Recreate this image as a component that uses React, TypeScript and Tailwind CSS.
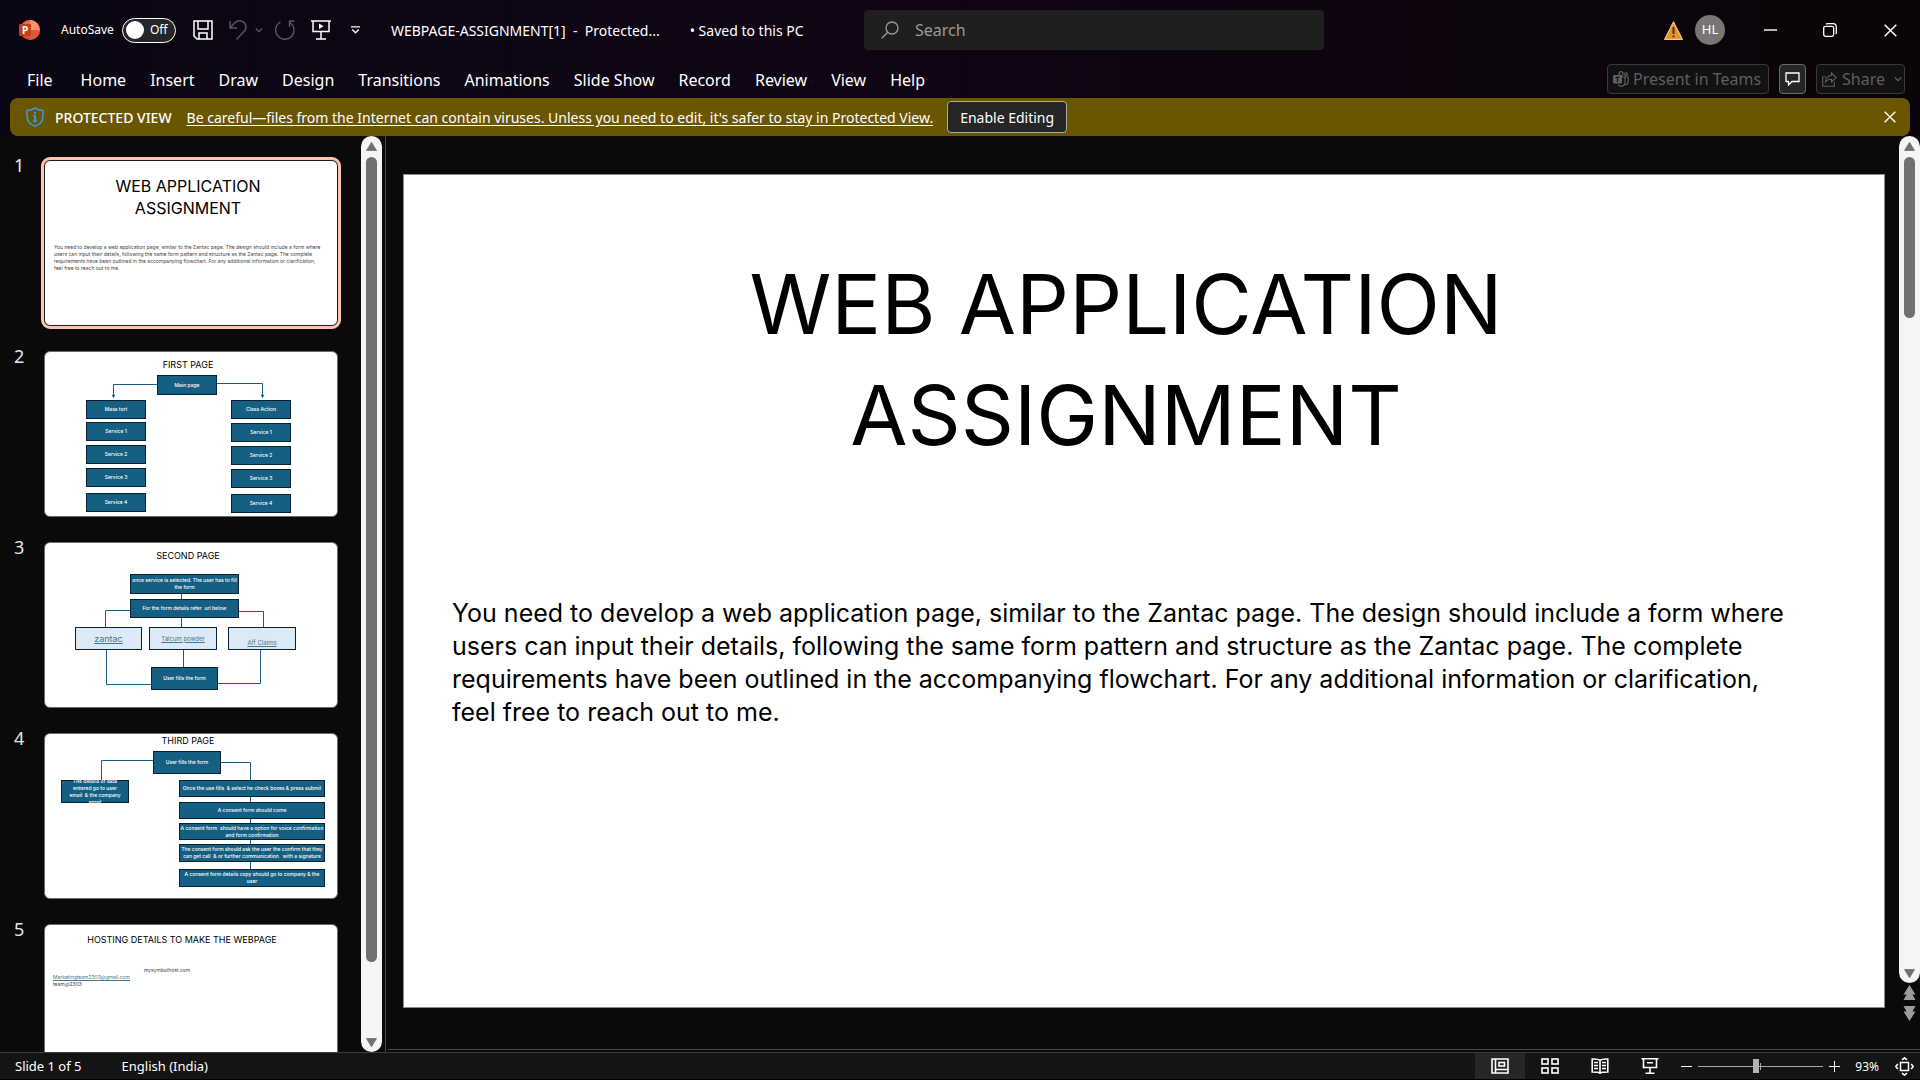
import type { ReactNode } from "react";

const stroke = { fill: "none", stroke: "currentColor" } as const;

function PowerPointLogo() {
  return (
    <svg width="21" height="20" viewBox="0 0 21 20" aria-label="PowerPoint">
      <circle cx="11" cy="10" r="10" fill="#d35230" />
      <path d="M11 0a10 10 0 0 1 10 10H11z" fill="#ff8f6b" />
      <path d="M11 10h10a10 10 0 0 1-10 10z" fill="#e0583a" />
      <path d="M11 0a10 10 0 0 0-10 10h10z" fill="#ed6c47" />
      <rect x="0" y="4" width="12" height="12" rx="1" fill="#c43e1c" />
      <text x="3" y="13.500" fontSize="10" fontWeight="700" fill="#fff" fontFamily="Noto Sans, sans-serif">P</text>
    </svg>
  );
}

function SaveIcon() {
  return (
    <svg width="20" height="20" viewBox="0 0 20 20" {...stroke} strokeWidth="1.500">
      <path d="M1 1h18v18H4l-3-3z" />
      <path d="M5 1v8h10V1M6 19v-6h8v6" />
    </svg>
  );
}

function UndoIcon() {
  return (
    <svg width="18" height="20" viewBox="0 0 18 20" {...stroke} strokeWidth="1.400">
      <path d="M1 1v7h7M1.500 7.500l4-4.500C9 0 13 0 15.500 3c2.300 3 1.800 6-.5 8.500L7.500 19.500" />
    </svg>
  );
}

function RedoIcon() {
  return (
    <svg width="21" height="20" viewBox="0 0 21 20" {...stroke} strokeWidth="1.400">
      <path d="M14 1h5.500M14.500 1v6M5.500 2a9.200 9.200 0 1 0 9.500.5" />
    </svg>
  );
}

function PresentIcon() {
  return (
    <svg width="20" height="20" viewBox="0 0 20 20" {...stroke} strokeWidth="1.500">
      <path d="M0 1h20M2 1v10.500h16V1M10 11.500V19M5 19h10" />
      <path d="M8 3.500v5.500l4.500-2.750z" fill="currentColor" stroke="none" />
    </svg>
  );
}

function Chevron({ size = 8 }: { size?: number }) {
  return (
    <svg width={size} height={size} viewBox="0 0 8 8" {...stroke} strokeWidth="1.300">
      <path d="M.8 2.500 4 5.700l3.200-3.200" />
    </svg>
  );
}

function CustomizeIcon() {
  return (
    <svg width="9" height="8" viewBox="0 0 9 8" {...stroke} strokeWidth="1.300">
      <path d="M0 .8h9M1.200 3.500l3.300 3.300 3.300-3.300" />
    </svg>
  );
}

function CloseIcon({ size }: { size: number }) {
  return (
    <svg width={size} height={size} viewBox="0 0 13 13" {...stroke} strokeWidth="1.500">
      <path d="m.7.7 11.600 11.600M12.300.7.700 12.300" />
    </svg>
  );
}

function ShieldIcon() {
  return (
    <svg width="18" height="20" viewBox="0 0 18 20" fill="none" stroke="#3a96d8" strokeWidth="1.600">
      <path d="M9 1C6.500 2.800 4 3.500 1 3.500V9c0 5 3 8.500 8 10.200C14 17.500 17 14 17 9V3.500C14 3.500 11.500 2.800 9 1z" />
      <path d="M9 5v2.200M7.300 9H9M9 8.500V14M7 14.300h4" strokeWidth="2" />
    </svg>
  );
}

function WarningIcon() {
  return (
    <svg width="19" height="19" viewBox="0 0 19 19" aria-label="Warning">
      <path d="M9.500 1 18.300 18.300H.7z" fill="#e8912d" stroke="#f4c77b" strokeWidth="1.200" strokeLinejoin="round" />
      <path d="M9.500 6v7M9.500 14.500v2" stroke="#4a3a22" strokeWidth="2" />
    </svg>
  );
}

function TeamsIcon() {
  return (
    <svg width="16" height="16" viewBox="0 0 16 16" {...stroke} strokeWidth="1.200">
      <circle cx="8" cy="2.700" r="2" />
      <circle cx="13" cy="3.200" r="1.400" />
      <path d="M9 6h3v5.500a3.800 3.800 0 0 1-7 2M12 6h3.200v5a2.600 2.600 0 0 1-3 2.500" />
      <rect x="0" y="4" width="9" height="8.500" rx="1" fill="currentColor" stroke="none" />
      <path d="M2.500 6.300h4M4.500 6.300V11" stroke="#121212" />
    </svg>
  );
}

function CommentIcon() {
  return (
    <svg width="15" height="14" viewBox="0 0 15 14" {...stroke} strokeWidth="1.300">
      <path d="M1 1h13v8.500H7L3.500 13V9.500H1z" />
    </svg>
  );
}

function ShareIcon() {
  return (
    <svg width="15" height="15" viewBox="0 0 15 15" {...stroke} strokeWidth="1.100">
      <path d="M4 5H.7v9.300h11.600V10" />
      <path d="M9.500 1v2.500C6 3.700 4 6 3.500 10c1.500-2 3.500-2.700 6-2.700V10l4.700-4.500z" />
    </svg>
  );
}

const tabs = ["File", "Home", "Insert", "Draw", "Design", "Transitions", "Animations", "Slide Show", "Record", "Review", "View", "Help"];

function TitleBar() {
  return (
    <div className="grid h-[60px] grid-cols-[864fr_460fr_596fr] items-center">
      <div className="flex min-w-0 items-center whitespace-nowrap pl-[19px] text-[14px]">
        <PowerPointLogo />
        <label htmlFor="autosave" className="ml-[21px] text-[12px]">AutoSave</label>
        <button id="autosave" role="switch" aria-checked="false" className="ml-2 flex h-[25px] w-[54px] items-center gap-[6px] rounded-full border border-white bg-[#262626] pl-[3px] text-[12px]">
          <span className="size-[18px] rounded-full bg-white" />
          Off
        </button>
        <button aria-label="Save" className="ml-[17px]"><SaveIcon /></button>
        <button aria-label="Undo" className="ml-4 flex items-center gap-2 text-[#5a5860]"><UndoIcon /><Chevron /></button>
        <button aria-label="Redo" className="ml-3 text-[#5a5860]"><RedoIcon /></button>
        <button aria-label="Start from beginning" className="ml-[15px]"><PresentIcon /></button>
        <button aria-label="Customize Quick Access Toolbar" className="ml-5"><CustomizeIcon /></button>
        <h1 className="ml-[31px] whitespace-pre">WEBPAGE-ASSIGNMENT[1]  -  Protected...</h1>
        <button className="ml-[30px]">• Saved to this PC</button>
      </div>
      <label className="flex h-10 items-center gap-4 rounded bg-[#1f1f1f] pl-[17px] text-[#9a9a9a]">
        <svg width="18" height="18" viewBox="0 0 18 18" {...stroke} strokeWidth="1.300">
          <circle cx="11" cy="7" r="6" />
          <path d="M6.800 11.200.7 17.300" />
        </svg>
        <input type="search" aria-label="Search" placeholder="Search" className="min-w-0 flex-1 bg-transparent text-[16px] outline-none placeholder:text-[#9a9a9a]" />
      </label>
      <div className="flex items-center justify-end pr-[23px]">
        <WarningIcon />
        <button className="ml-3 size-[30px] rounded-full bg-[#7a7474] text-[13px]">HL</button>
        <button aria-label="Minimize" className="ml-[39px]">
          <svg width="13" height="13" viewBox="0 0 13 13" {...stroke} strokeWidth="1.400"><path d="M0 6h13" /></svg>
        </button>
        <button aria-label="Restore" className="ml-[46px]">
          <svg width="14" height="14" viewBox="0 0 14 14" {...stroke} strokeWidth="1.300">
            <rect x=".7" y="3.300" width="10" height="10" rx="1.800" />
            <path d="M3 1.200C3.500.8 4 .7 4.500.7H10a3.300 3.300 0 0 1 3.300 3.300v5.500c0 .5-.1 1-.5 1.500" />
          </svg>
        </button>
        <button aria-label="Close" className="ml-[47px]"><CloseIcon size={13} /></button>
      </div>
    </div>
  );
}

function TabRow() {
  return (
    <div className="flex h-[38px] items-center justify-between whitespace-nowrap pl-[27px] pr-[15px] text-[16px]">
      <nav className="flex gap-6 pt-[2px]">
        {tabs.map((tab) => (
          <button key={tab} className="first:mr-1">{tab}</button>
        ))}
      </nav>
      <div className="flex h-[30px] gap-[10px] text-[#5f5f5f]">
        <button className="flex w-[162px] items-center gap-1 rounded border border-[#3a3a3a] bg-[#121212] pl-[5px]"><TeamsIcon />Present in Teams</button>
        <button aria-label="Comments" className="flex w-[27px] items-center justify-center rounded border border-[#6b6b6b] bg-[#262626] text-white"><CommentIcon /></button>
        <button className="flex w-[89px] items-center gap-[5px] rounded border border-[#3a3a3a] bg-[#121212] pl-[5px]"><ShareIcon />Share<span className="ml-1"><Chevron size={8} /></span></button>
      </div>
    </div>
  );
}

function ProtectedViewBar() {
  return (
    <div role="alert" className="mx-[10px] flex h-[38px] items-center whitespace-nowrap rounded-lg bg-[#6b5600] pl-4 pr-[14px] text-[14px]">
      <ShieldIcon />
      <strong className="ml-[11px] font-medium">PROTECTED VIEW</strong>
      <a href="#protected-view" className="ml-[15px] underline underline-offset-2">Be careful—files from the Internet can contain viruses. Unless you need to edit, it's safer to stay in Protected View.</a>
      <button className="ml-[14px] h-8 w-[120px] rounded border border-[#a8a8a8] bg-[#262626]">Enable Editing</button>
      <button aria-label="Close message" className="ml-auto"><CloseIcon size={12} /></button>
    </div>
  );
}

function Triangle({ down = false }: { down?: boolean }) {
  return (
    <svg width="11" height="9" viewBox="0 0 11 9" fill="#707070">
      <path d={down ? "M.5.500h10L5.500 8.700z" : "M.5 8.500h10L5.500.3z"} stroke="#707070" strokeLinejoin="round" strokeWidth=".8" />
    </svg>
  );
}

function Scrollbar({ thumb, rest }: { thumb: number; rest: number }) {
  return (
    <div className="flex min-h-0 w-[21px] flex-1 flex-col items-center rounded-full bg-[#f5f5f5]">
      <span className="flex h-[21px] flex-none items-center"><Triangle /></span>
      <span className="w-[11px] rounded-full bg-[#707070]" style={{ flexGrow: thumb }} />
      <span style={{ flexGrow: rest }} />
      <span className="flex h-5 flex-none items-center"><Triangle down /></span>
    </div>
  );
}

type Box = { x: number; y: number; w: number; h: number; lines: string[]; link?: "lg" | "sm" | "low" };

function Diagram({ boxes, lines, arrows = [] }: { boxes: Box[]; lines: string[]; arrows?: string[] }) {
  return (
    <div className="absolute inset-x-0 top-px">
      <svg className="absolute left-0 top-0" width="292" height="164" viewBox="0 0 292 164" fill="none" stroke="#156082">
        {lines.map((d) => <path key={d} d={d} />)}
        {arrows.map((d) => <path key={d} d={d} fill="#156082" />)}
      </svg>
      {boxes.map((b) => (
        <div
          key={`${b.x}-${b.y}`}
          className={
            b.link
              ? "absolute flex flex-col items-center justify-center border border-[#042433] bg-[#dce9f7] text-[#467886] underline"
              : "absolute flex flex-col items-center justify-center whitespace-pre border border-[#042433] bg-[#156082] text-[5px] font-medium leading-[7px] text-white"
          }
          style={{ left: b.x, top: b.y, width: b.w, height: b.h }}
        >
          {b.lines.map((t) => (
            <span key={t} className={b.link === "lg" ? "text-[9px] leading-[10px]" : b.link === "sm" ? "text-[6px] leading-[8px]" : b.link === "low" ? "pt-2 text-[6px] leading-[8px]" : ""}>{t}</span>
          ))}
        </div>
      ))}
    </div>
  );
}

const services = ["Service 1", "Service 2", "Service 3", "Service 4"];
const column = (x: number, head: string, ys: number[]): Box[] =>
  [head, ...services].map((t, i) => ({ x, y: ys[i], w: 60, h: 19, lines: [t] }));

const thumbTitle = "pr-[6px] text-center text-[9px] leading-3";

const bodyLines = [
  "You need to develop a web application page, similar to the Zantac page. The design should include a form where",
  "users can input their details, following the same form pattern and structure as the Zantac page. The complete",
  "requirements have been outlined in the accompanying flowchart. For any additional information or clarification,",
  "feel free to reach out to me.",
];

const thumbs: ReactNode[] = [
  <>
    <p className="pr-[6px] pt-[14px] text-center text-[16px] leading-[22px]">WEB APPLICATION<br />ASSIGNMENT</p>
    <p className="whitespace-nowrap pl-[9px] pt-[25px] text-[5px] leading-[7px] text-[#444]">
      {bodyLines.map((l) => <span key={l} className="block">{l}</span>)}
    </p>
  </>,
  <>
    <p className={`pt-[7px] ${thumbTitle}`}>FIRST PAGE</p>
    <Diagram
      lines={["M113 31.500H68.500V42", "M172 30.500H217.500V42"]}
      arrows={["M67.500 42h2l-1 2.500z", "M216.500 42h2l-1 2.500z"]}
      boxes={[
        { x: 112, y: 22, w: 60, h: 20, lines: ["Main page"] },
        ...column(41, "Mass tort", [47, 69, 92, 115, 140]),
        ...column(186, "Class Action", [47, 70, 93, 116, 141]),
      ]}
    />
  </>,
  <>
    <p className={`pt-[7px] ${thumbTitle}`}>SECOND PAGE</p>
    <Diagram
      lines={["M136.500 50V83", "M138.500 106V124", "M86 66.500H60.500V84", "M194 67.500H218.500V84", "M61.500 106V140.500H107", "M215.500 106V139.500H172"]}
      boxes={[
        { x: 85, y: 30, w: 109, h: 20, lines: ["once service is selected. The user has to fill", "the form"] },
        { x: 85, y: 55, w: 109, h: 19, lines: ["For the form details refer  url below"] },
        { x: 30, y: 83, w: 67, h: 23, lines: ["zantac"], link: "lg" },
        { x: 104, y: 83, w: 68, h: 23, lines: ["Talcum powder"], link: "sm" },
        { x: 183, y: 83, w: 68, h: 23, lines: ["Aff Claims"], link: "low" },
        { x: 106, y: 123, w: 67, h: 23, lines: ["User fills the form"] },
      ]}
    />
  </>,
  <>
    <p className={`pt-px ${thumbTitle}`}>THIRD PAGE</p>
    <Diagram
      lines={["M109 25.500H56.500V45", "M176 27.500H205.500V135"]}
      boxes={[
        { x: 108, y: 16, w: 68, h: 23, lines: ["User fills the form"] },
        { x: 16, y: 45, w: 68, h: 23, lines: ["The details of data", "entered go to user", "email  & the company", "email"] },
        { x: 134, y: 45, w: 146, h: 17, lines: ["Once the use fills  & select he check boxes & press submit"] },
        { x: 134, y: 67, w: 146, h: 17, lines: ["A consent form should come"] },
        { x: 134, y: 88, w: 146, h: 17, lines: ["A consent form  should have a option for voice confirmation", "and form confirmation"] },
        { x: 134, y: 109, w: 146, h: 18, lines: ["The consent form should ask the user the confirm that they", "can get call  & or further communication   with a signature"] },
        { x: 134, y: 134, w: 146, h: 18, lines: ["A consent form details copy should go to company & the", "user"] },
      ]}
    />
  </>,
  <>
    <p className="pr-[18px] pt-[9px] text-center text-[9px] leading-3">HOSTING DETAILS TO MAKE THE WEBPAGE</p>
    <p className="pl-[99px] pt-[21px] text-[5px] leading-[7px] text-[#444]">mysymbolhost.com</p>
    <p className="pl-2 text-[5px] leading-[7px] text-[#444]">
      <span className="text-[#467886] underline">Marketingteam2303@gmail.com</span><br />team@2303
    </p>
  </>,
];

function SlideRail() {
  return (
    <aside className="flex w-[386px] flex-none border-r border-[#4a4a4a] pr-[3px]">
      <ol className="flex min-w-0 flex-1 flex-col gap-[25px] overflow-hidden pt-6">
        {thumbs.map((content, i) => (
          <li key={i} className="flex h-[166px] flex-none">
            <span className="w-11 flex-none pl-[14px] text-[18px] leading-[11px] text-[#e6e6e6]">{i + 1}</span>
            <div
              className={
                i === 0
                  ? "relative w-[294px] overflow-hidden rounded-md border border-[#1c1c1c] bg-white font-[Inter,sans-serif] text-black outline-3 outline-[#ffc3b0]"
                  : "relative w-[294px] overflow-hidden rounded-md border border-[#6b6b6b] bg-white font-[Inter,sans-serif] text-black"
              }
            >
              {content}
            </div>
          </li>
        ))}
      </ol>
      <div className="flex flex-col"><Scrollbar thumb={805} rest={70} /></div>
    </aside>
  );
}

function SlideNavButton({ label, down = false }: { label: string; down?: boolean }) {
  return (
    <button aria-label={label}>
      <svg width="13" height="15" viewBox="0 0 13 15" fill="#9c9c9c">
        {down ? <path d="M.5 0h12L9.500 5.500h3L6.500 15 .5 5.500h3z" /> : <path d="M.5 15h12L9.500 9.500h3L6.500 0 .5 9.500h3z" />}
      </svg>
    </button>
  );
}

function Canvas() {
  return (
    <main className="flex min-w-0 flex-1 flex-col">
      <div className="flex min-h-0 flex-1">
        <div className="min-w-0 flex-1 pl-[17px] pr-[14px] pt-[38px]">
          <article className="aspect-video overflow-hidden border border-[#8a8a8a] bg-white font-[Inter,sans-serif] text-black">
            <h2 className="pr-[36px] pt-[74px] text-center text-[83px] leading-[111px]">WEB APPLICATION<br />ASSIGNMENT</h2>
            <p className="whitespace-nowrap pl-12 pt-[126px] text-[25px] leading-[33px]">
              {bodyLines.map((l) => <span key={l} className="block">{l}</span>)}
            </p>
          </article>
        </div>
        <div className="flex flex-none flex-col items-center pb-7">
          <Scrollbar thumb={161} rest={645} />
          <div className="mt-[2px] flex flex-col gap-[6px]">
            <SlideNavButton label="Previous slide" />
            <SlideNavButton label="Next slide" down />
          </div>
        </div>
      </div>
      <div className="mb-[2px] ml-[2px] border-t border-[#4a4a4a]" />
    </main>
  );
}

const views: { label: string; icon: ReactNode }[] = [
  {
    label: "Normal",
    icon: <><path d="M1 1h16v14H1zM4.500 1v14M4.500 11.500H17" /><rect x="8" y="4.500" width="5.500" height="3.500" /></>,
  },
  {
    label: "Slide Sorter",
    icon: <><rect x="1" y="1" width="6" height="5" /><rect x="11" y="1" width="6" height="5" /><rect x="1" y="10" width="6" height="5" /><rect x="11" y="10" width="6" height="5" /></>,
  },
  {
    label: "Reading View",
    icon: <><path d="M9 2.500C7.500 1 5 .8 1.200 1v13c3.800 0 6.300 0 7.800 1.300 1.500-1.300 4-1.300 7.800-1.300V1C13 .8 10.500 1 9 2.500zM9 2.500v13" /><path d="M3 4.500h4M3 7.500h4M3 10.500h4M11 4.500h4M11 7.500h4M11 10.500h4" /></>,
  },
  {
    label: "Slide Show",
    icon: <path d="M.5.8h17M2.500.8v8.700h13V.8M9 9.500V15M4.500 15.300h9M6 4.700h6" />,
  },
];

function StatusBar() {
  return (
    <footer className="flex h-7 flex-none items-center whitespace-nowrap border-b border-t border-b-black border-t-[#3a3a3a] bg-[#141414] pl-[15px] pr-[6px] text-[13px]">
      <div className="flex gap-10 pt-px">
        <button>Slide 1 of 5</button>
        <button>English (India)</button>
      </div>
      <div className="ml-auto flex h-full">
        {views.map((v, i) => (
          <button key={v.label} aria-label={v.label} className={i === 0 ? "flex w-[50px] items-center justify-center bg-[#262626]" : "flex w-[50px] items-center justify-center"}>
            <svg width="18" height="16" viewBox="0 0 18 16" {...stroke} strokeWidth="1.600">{v.icon}</svg>
          </button>
        ))}
      </div>
      <button aria-label="Zoom out" className="ml-[6px]">
        <svg width="11" height="11" viewBox="0 0 11 11" {...stroke}><path d="M0 5.500h11" /></svg>
      </button>
      <div className="relative ml-[6px] flex h-[14px] w-[125px] items-center">
        <span className="absolute left-[62px] top-1 h-[7px] w-px bg-[#a8a8a8]" />
        <input
          type="range"
          aria-label="Zoom"
          min={10}
          max={190}
          defaultValue={93}
          className="relative h-px w-full appearance-none bg-[#a8a8a8] [&::-webkit-slider-thumb]:h-[14px] [&::-webkit-slider-thumb]:w-[6px] [&::-webkit-slider-thumb]:appearance-none [&::-webkit-slider-thumb]:bg-[#b4b4b4]"
        />
      </div>
      <button aria-label="Zoom in" className="ml-[6px]">
        <svg width="11" height="11" viewBox="0 0 11 11" {...stroke}><path d="M0 5.500h11M5.500 0v11" /></svg>
      </button>
      <button className="ml-[15px] pt-px text-[12px]">93%</button>
      <button aria-label="Fit slide to current window" className="ml-4">
        <svg width="19" height="19" viewBox="0 0 19 19" {...stroke} strokeWidth="1.500">
          <rect x="5.500" y="5.500" width="8" height="8" />
          <path d="m7 2.800 2.500-2 2.500 2M7 16.200l2.500 2 2.500-2M2.800 7l-2 2.500 2 2.500M16.200 7l2 2.500-2 2.500" />
        </svg>
      </button>
    </footer>
  );
}

export default function App() {
  return (
    <div className="flex h-screen flex-col overflow-hidden bg-[#0a0a0a] font-['Noto_Sans',sans-serif] text-white">
      <header className="flex-none bg-linear-to-r from-[#0a0614] via-[#100414] to-[#0a0508]">
        <TitleBar />
        <TabRow />
        <ProtectedViewBar />
      </header>
      <div className="flex min-h-0 flex-1">
        <SlideRail />
        <Canvas />
      </div>
      <StatusBar />
    </div>
  );
}
